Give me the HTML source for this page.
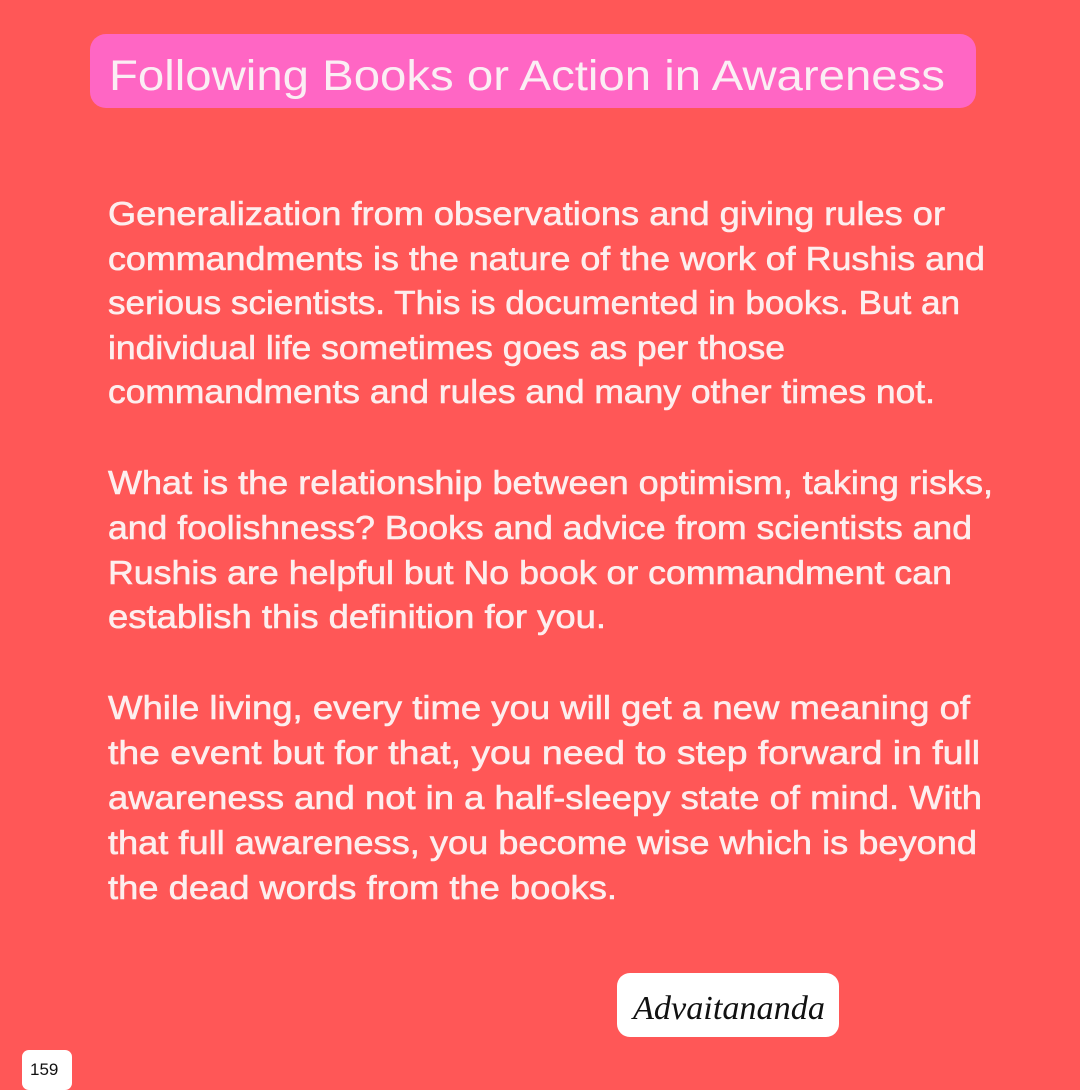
<!DOCTYPE html>
<html><head><meta charset="utf-8"><style>
html,body{margin:0;padding:0;}
body{width:1080px;height:1080px;background:#ff5757;position:relative;overflow:hidden;font-family:"Liberation Sans",sans-serif;}
.title{position:absolute;left:90px;top:34px;width:886px;height:74px;background:#ff66c4;border-radius:16px;}
.sig{position:absolute;left:617px;top:973px;width:222px;height:64px;background:#fff;border-radius:13px;}
.pg{position:absolute;left:22px;top:1050px;width:50px;height:40px;background:#fff;border-radius:7px;}
svg{position:absolute;left:0;top:0;}
</style></head><body>
<div class="title"></div>
<div class="sig"></div>
<div class="pg"></div>
<svg width="1080" height="1080" font-family="Liberation Sans, sans-serif">
<text x="109" y="90" font-size="43" fill="#fbeef4" textLength="836" lengthAdjust="spacingAndGlyphs">Following Books or Action in Awareness</text>
<g fill="#fdeeee" stroke="#fdeeee" stroke-width="0.6" font-size="33">
<text x="108" y="225" textLength="837" lengthAdjust="spacingAndGlyphs">Generalization from observations and giving rules or</text>
<text x="108" y="270" textLength="877" lengthAdjust="spacingAndGlyphs">commandments is the nature of the work of Rushis and</text>
<text x="108" y="314" textLength="852" lengthAdjust="spacingAndGlyphs">serious scientists. This is documented in books. But an</text>
<text x="108" y="359" textLength="677" lengthAdjust="spacingAndGlyphs">individual life sometimes goes as per those</text>
<text x="108" y="403" textLength="827" lengthAdjust="spacingAndGlyphs">commandments and rules and many other times not.</text>
<text x="108" y="494" textLength="885" lengthAdjust="spacingAndGlyphs">What is the relationship between optimism, taking risks,</text>
<text x="108" y="539" textLength="864" lengthAdjust="spacingAndGlyphs">and foolishness? Books and advice from scientists and</text>
<text x="108" y="584" textLength="844" lengthAdjust="spacingAndGlyphs">Rushis are helpful but No book or commandment can</text>
<text x="108" y="628" textLength="498" lengthAdjust="spacingAndGlyphs">establish this definition for you.</text>
<text x="108" y="719" textLength="862" lengthAdjust="spacingAndGlyphs">While living, every time you will get a new meaning of</text>
<text x="108" y="764" textLength="872" lengthAdjust="spacingAndGlyphs">the event but for that, you need to step forward in full</text>
<text x="108" y="809" textLength="874" lengthAdjust="spacingAndGlyphs">awareness and not in a half-sleepy state of mind. With</text>
<text x="108" y="854" textLength="869" lengthAdjust="spacingAndGlyphs">that full awareness, you become wise which is beyond</text>
<text x="108" y="899" textLength="509" lengthAdjust="spacingAndGlyphs">the dead words from the books.</text>
</g>
<text x="633" y="1019" font-family="Liberation Serif, serif" font-style="italic" font-size="34" fill="#111" textLength="192" lengthAdjust="spacingAndGlyphs">Advaitananda</text>
<text x="30" y="1075" font-size="17" fill="#111">159</text>
</svg>
</body></html>
